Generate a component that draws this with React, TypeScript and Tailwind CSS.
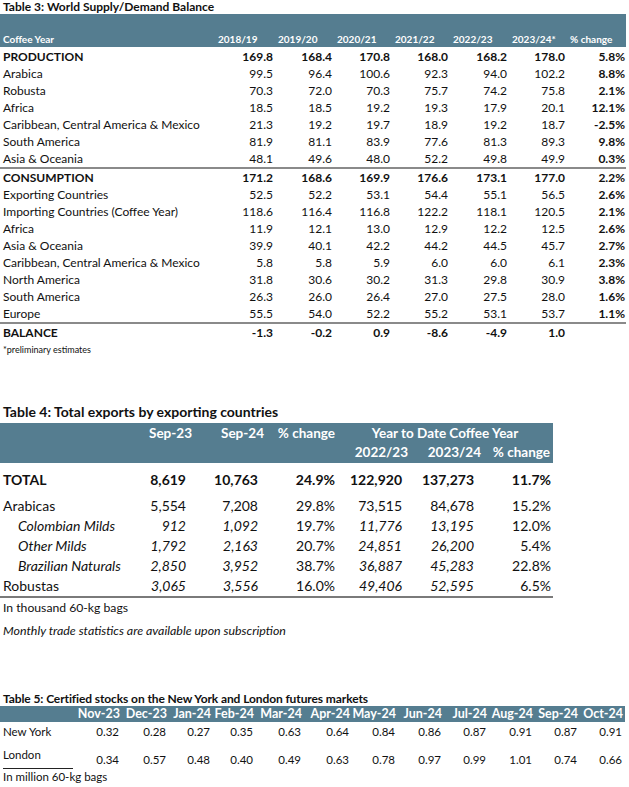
import React from "react";

const BAND = "bg-[#557d90]";

type R3 = { label: string; vals: string[]; pct: string; bold?: boolean };

const t3a: R3[] = [
  { label: "PRODUCTION", vals: ["169.8", "168.4", "170.8", "168.0", "168.2", "178.0"], pct: "5.8%", bold: true },
  { label: "Arabica", vals: ["99.5", "96.4", "100.6", "92.3", "94.0", "102.2"], pct: "8.8%" },
  { label: "Robusta", vals: ["70.3", "72.0", "70.3", "75.7", "74.2", "75.8"], pct: "2.1%" },
  { label: "Africa", vals: ["18.5", "18.5", "19.2", "19.3", "17.9", "20.1"], pct: "12.1%" },
  { label: "Caribbean, Central America & Mexico", vals: ["21.3", "19.2", "19.7", "18.9", "19.2", "18.7"], pct: "-2.5%" },
  { label: "South America", vals: ["81.9", "81.1", "83.9", "77.6", "81.3", "89.3"], pct: "9.8%" },
  { label: "Asia & Oceania", vals: ["48.1", "49.6", "48.0", "52.2", "49.8", "49.9"], pct: "0.3%" },
];

const t3b: R3[] = [
  { label: "CONSUMPTION", vals: ["171.2", "168.6", "169.9", "176.6", "173.1", "177.0"], pct: "2.2%", bold: true },
  { label: "Exporting Countries", vals: ["52.5", "52.2", "53.1", "54.4", "55.1", "56.5"], pct: "2.6%" },
  { label: "Importing Countries (Coffee Year)", vals: ["118.6", "116.4", "116.8", "122.2", "118.1", "120.5"], pct: "2.1%" },
  { label: "Africa", vals: ["11.9", "12.1", "13.0", "12.9", "12.2", "12.5"], pct: "2.6%" },
  { label: "Asia & Oceania", vals: ["39.9", "40.1", "42.2", "44.2", "44.5", "45.7"], pct: "2.7%" },
  { label: "Caribbean, Central America & Mexico", vals: ["5.8", "5.8", "5.9", "6.0", "6.0", "6.1"], pct: "2.3%" },
  { label: "North America", vals: ["31.8", "30.6", "30.2", "31.3", "29.8", "30.9"], pct: "3.8%" },
  { label: "South America", vals: ["26.3", "26.0", "26.4", "27.0", "27.5", "28.0"], pct: "1.6%" },
  { label: "Europe", vals: ["55.5", "54.0", "52.2", "55.2", "53.1", "53.7"], pct: "1.1%" },
];

const t3c: R3[] = [
  { label: "BALANCE", vals: ["-1.3", "-0.2", "0.9", "-8.6", "-4.9", "1.0"], pct: "", bold: true },
];

function Row3({ r }: { r: R3 }) {
  return (
    <div className="grid grid-cols-[215px_58px_59px_58px_58px_59px_58px_60px] h-[17px] items-center text-[12px] leading-none text-[#111]">
      <div className={"pl-[3px] whitespace-nowrap " + (r.bold ? "font-bold" : "")}>{r.label}</div>
      {r.vals.map((v, i) => (
        <div key={i} className={"text-right " + (r.bold ? "font-bold" : "")}>{v}</div>
      ))}
      <div className="text-right font-bold">{r.pct}</div>
    </div>
  );
}

type R4 = { label: string; vals: string[]; bold?: boolean; italicLabel?: boolean; italicNums?: boolean };

const t4: R4[] = [
  { label: "Arabicas", vals: ["5,554", "7,208", "29.8%", "73,515", "84,678", "15.2%"] },
  { label: "Colombian Milds", vals: ["912", "1,092", "19.7%", "11,776", "13,195", "12.0%"], italicLabel: true, italicNums: true },
  { label: "Other Milds", vals: ["1,792", "2,163", "20.7%", "24,851", "26,200", "5.4%"], italicLabel: true, italicNums: true },
  { label: "Brazilian Naturals", vals: ["2,850", "3,952", "38.7%", "36,887", "45,283", "22.8%"], italicLabel: true, italicNums: true },
  { label: "Robustas", vals: ["3,065", "3,556", "16.0%", "49,406", "52,595", "6.5%"], italicNums: true },
];

const pr4 = ["pr-[6px]", "pr-[6px]", "pr-[2px]", "pr-[6px]", "pr-[7px]", "pr-[2px]"];

function Row4({ r }: { r: R4 }) {
  return (
    <div className="grid grid-cols-[130px_62px_72px_73px_71px_73px_72px] h-[20px] items-center text-[14px] leading-none text-[#111]">
      <div className={"whitespace-nowrap " + (r.italicLabel ? "italic pl-[18px]" : "pl-[3px]")}>{r.label}</div>
      {r.vals.map((v, i) => {
        const isPct = i === 2 || i === 5;
        return (
          <div key={i} className={"text-right " + pr4[i] + " " + (r.italicNums && !isPct ? "italic" : "")}>
            {v}
          </div>
        );
      })}
    </div>
  );
}

const months = ["Nov-23", "Dec-23", "Jan-24", "Feb-24", "Mar-24", "Apr-24", "May-24", "Jun-24", "Jul-24", "Aug-24", "Sep-24", "Oct-24"];
const ny = ["0.32", "0.28", "0.27", "0.35", "0.63", "0.64", "0.84", "0.86", "0.87", "0.91", "0.87", "0.91"];
const ldn = ["0.34", "0.57", "0.48", "0.40", "0.49", "0.63", "0.78", "0.97", "0.99", "1.01", "0.74", "0.66"];

const G5 = "grid grid-cols-[76px_44px_47px_44px_43px_48px_48px_46px_46px_45px_46px_45px_45px]";

export default function App() {
  return (
    <div className="w-[629px] h-[787px] bg-white overflow-hidden font-['Lato',sans-serif] text-[#111]">
      {/* Table 3 */}
      <div className="h-[14px] pl-[3px] text-[12px] font-bold leading-[14px] whitespace-nowrap">
        Table 3: World Supply/Demand Balance
      </div>
      <div className={"w-[626px] h-[33px] " + BAND + " grid grid-cols-[215px_58px_59px_58px_58px_59px_58px_60px] items-end pb-[1px] text-white text-[10px] font-bold leading-[13px]"}>
        <div className="pl-[3px]">Coffee Year</div>
        <div className="pl-[3px]">2018/19</div>
        <div className="pl-[5px]">2019/20</div>
        <div className="pl-[5px]">2020/21</div>
        <div className="pl-[5px]">2021/22</div>
        <div className="pl-[5px]">2022/23</div>
        <div className="pl-[5px]">2023/24*</div>
        <div className="pl-[5px]">% change</div>
      </div>
      <div className="h-[1px]" />
      {t3a.map((r, i) => (
        <Row3 key={"a" + i} r={r} />
      ))}
      <div className="w-[626px] h-[2px] bg-[#8a8a8a]" />
      {t3b.map((r, i) => (
        <Row3 key={"b" + i} r={r} />
      ))}
      <div className="w-[626px] h-[2px] bg-[#8a8a8a]" />
      {t3c.map((r, i) => (
        <Row3 key={"c" + i} r={r} />
      ))}
      <div className="h-[16px] pl-[3px] flex items-center text-[9px] leading-none">*preliminary estimates</div>

      {/* Table 4 */}
      <div className="h-[47px]" />
      <div className="h-[16px] pl-[3px] flex items-center text-[14px] font-bold leading-none whitespace-nowrap">
        Table 4: Total exports by exporting countries
      </div>
      <div className="h-[3px]" />
      <div className={"w-[553px] h-[40px] " + BAND + " text-white text-[13.5px] font-bold leading-none pt-[2px]"}>
        <div className="grid grid-cols-[130px_62px_72px_73px_71px_73px_72px] h-[18px] items-center">
          <div />
          <div className="text-right">Sep-23</div>
          <div className="text-right">Sep-24</div>
          <div className="text-right pr-[2px]">% change</div>
          <div className="col-span-3 text-center">Year to Date Coffee Year</div>
        </div>
        <div className="grid grid-cols-[130px_62px_72px_73px_71px_73px_72px] h-[19px] items-center">
          <div />
          <div />
          <div />
          <div />
          <div className="text-right">2022/23</div>
          <div className="text-right">2023/24</div>
          <div className="text-right pr-[3px]">% change</div>
        </div>
      </div>
      <div className="h-[8px]" />
      <div className="grid grid-cols-[130px_62px_72px_73px_71px_73px_72px] h-[18px] items-center text-[14px] font-bold leading-none">
        <div className="pl-[3px]">TOTAL</div>
        <div className="text-right pr-[6px]">8,619</div>
        <div className="text-right pr-[6px]">10,763</div>
        <div className="text-right pr-[2px]">24.9%</div>
        <div className="text-right pr-[6px]">122,920</div>
        <div className="text-right pr-[7px]">137,273</div>
        <div className="text-right pr-[2px]">11.7%</div>
      </div>
      <div className="h-[7px]" />
      {t4.map((r, i) => (
        <Row4 key={i} r={r} />
      ))}
      <div className="w-[553px] h-[2px] bg-[#7a7a7a]" />
      <div className="h-[20px] pl-[3px] flex items-center text-[12.2px] leading-none">In thousand 60-kg bags</div>
      <div className="h-[3px]" />
      <div className="h-[20px] pl-[3px] flex items-center text-[12.4px] italic leading-none whitespace-nowrap">
        Monthly trade statistics are available upon subscription
      </div>

      {/* Table 5 */}
      <div className="h-[51px]" />
      <div className="h-[14px] pl-[3px] flex items-center text-[12px] font-bold leading-none whitespace-nowrap tracking-[-0.1px]">
        Table 5: Certified stocks on the New York and London futures markets
      </div>
      <div className={"w-[625px] h-[16px] " + BAND + " " + G5 + " items-center text-white text-[12.5px] font-bold leading-none"}>
        <div />
        {months.map((m) => (
          <div key={m} className="text-right">
            {m}
          </div>
        ))}
      </div>
      <div className={G5 + " h-[20px] items-center text-[11.5px] leading-none"}>
        <div className="pl-[3px] whitespace-nowrap">New York</div>
        {ny.map((v, i) => (
          <div key={i} className="text-right pr-[1px]">
            {v}
          </div>
        ))}
      </div>
      <div className={G5 + " h-[26px] text-[11.5px] leading-none"}>
        <div className="pl-[3px] pt-[7px] whitespace-nowrap">London</div>
        {ldn.map((v, i) => (
          <div key={i} className="text-right pr-[1px] pt-[12px]">
            {v}
          </div>
        ))}
      </div>
      <div className="ml-[3px] w-[70px] h-[1px] bg-[#222]" />
      <div className="h-[16px] pl-[3px] flex items-center text-[11.5px] leading-none whitespace-nowrap">In million 60-kg bags</div>
    </div>
  );
}
